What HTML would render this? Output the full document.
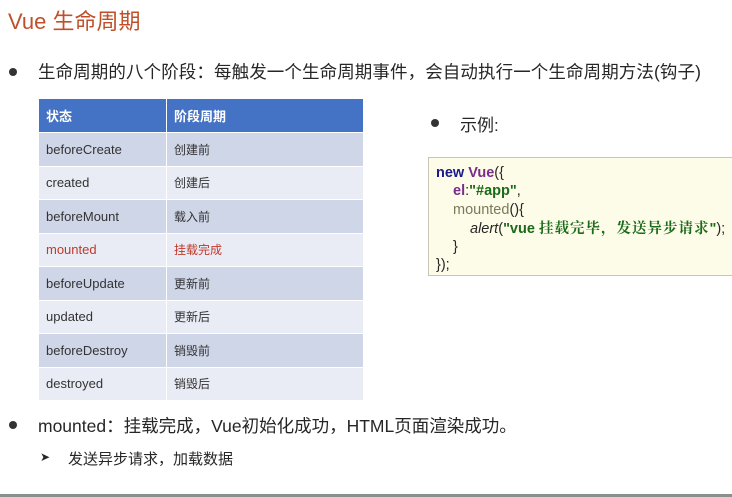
<!DOCTYPE html>
<html><head><meta charset="utf-8"><style>
body{margin:0;width:732px;height:497px;background:#fff;position:relative;overflow:hidden;font-family:"Liberation Sans","Noto Sans CJK SC",sans-serif;color:#262626}
.a{position:absolute;white-space:nowrap}
.title{left:8px;top:4px;font-size:22px;color:#c0502a}
.dot{width:8px;height:8px;border-radius:50%;background:#333;position:absolute}
table{position:absolute;left:38px;top:98px;width:326px;border-collapse:collapse;font-size:13px}
td{height:32.5px;padding:0 0 0 7px;border:1.5px solid #fff;color:#333}
th{height:31px;background:#4472c4;color:#fff;text-align:left;padding-left:7px;font-size:13px;border:1.5px solid #fff}
tr.d td{background:#cfd6e8}tr.l td{background:#e9ecf4}
td.c{font-size:12px}
.code{position:absolute;left:428px;top:157px;width:310px;height:119px;background:#fdfce9;border:1px solid #c9c6b8;font-size:14.5px;line-height:18.3px;box-sizing:border-box;padding:6px 0 0 7px}
.code div{white-space:nowrap}
</style></head><body>
<div class="a title">Vue 生命周期</div>
<div class="dot" style="left:9px;top:68px"></div>
<div class="a" style="left:38px;top:59px;font-size:17.5px;letter-spacing:0.1px">生命周期的八个阶段：每触发一个生命周期事件，会自动执行一个生命周期方法(钩子)</div>
<table>
<tr><th style="width:119px">状态</th><th>阶段周期</th></tr>
<tr class="d"><td>beforeCreate</td><td class="c">创建前</td></tr>
<tr class="l"><td>created</td><td class="c">创建后</td></tr>
<tr class="d"><td>beforeMount</td><td class="c">载入前</td></tr>
<tr class="l"><td style="color:#c0392b">mounted</td><td class="c" style="color:#c0392b">挂载完成</td></tr>
<tr class="d"><td>beforeUpdate</td><td class="c">更新前</td></tr>
<tr class="l"><td>updated</td><td class="c">更新后</td></tr>
<tr class="d"><td>beforeDestroy</td><td class="c">销毁前</td></tr>
<tr class="l"><td>destroyed</td><td class="c">销毁后</td></tr>
</table>
<div class="dot" style="left:431px;top:119px"></div>
<div class="a" style="left:460px;top:111px;font-size:17px">示例:</div>
<div class="code">
<div><b style="color:#1a1a8c">new</b> <b style="color:#7a2a8a">Vue</b>({</div>
<div style="padding-left:17px"><b style="color:#7a2a8a">el</b>:<b style="color:#1a6a1a">"#app"</b>,</div>
<div style="padding-left:17px"><span style="color:#7a7a5a">mounted</span>(){</div>
<div style="padding-left:34px"><i>alert</i>(<b style="color:#1a6a1a">"vue <span style="font-family:'Noto Serif CJK SC',serif;letter-spacing:1px">挂载完毕，发送异步请求</span>"</b>);</div>
<div style="padding-left:17px">}</div>
<div>});</div></div>
<div class="dot" style="left:9px;top:421px"></div>
<div class="a" style="left:38px;top:413px;font-size:17.5px">mounted：挂载完成，Vue初始化成功，HTML页面渲染成功。</div>
<div class="a" style="left:40px;top:450px;font-size:12px">➤</div>
<div class="a" style="left:68px;top:448px;font-size:15px">发送异步请求，加载数据</div>
<div style="position:absolute;left:0;top:494px;width:732px;height:3px;background:#8a908c"></div>
</body></html>
